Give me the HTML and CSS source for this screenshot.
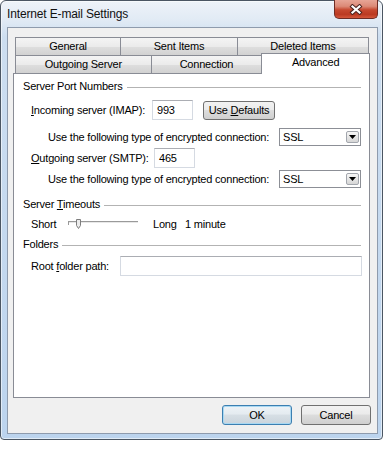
FILE: index.html
```html
<!DOCTYPE html>
<html lang="en">
<head>
    <meta charset="UTF-8">
    <meta name="viewport" content="width=device-width, initial-scale=1.0">
    <title>Internet E-mail Settings</title>
    <link rel="stylesheet" href="styles.css">
</head>
<body>
<div class="window">
    <div class="titlebar">
        <span class="title">Internet E-mail Settings</span>
        <button class="close" aria-label="Close">
            <svg width="14" height="11" viewBox="0 0 14 11">
                <path d="M3.5 2.5 L10.5 8.5 M10.5 2.5 L3.5 8.5" stroke="#4b2420" stroke-width="4.2" stroke-linecap="square" fill="none"/>
                <path d="M3.5 2.5 L10.5 8.5 M10.5 2.5 L3.5 8.5" stroke="#fff" stroke-width="2.2" stroke-linecap="square" fill="none"/>
            </svg>
        </button>
    </div>

    <div class="client">
        <div class="tabs">
            <div class="tab-row">
                <div class="tab t-general">General</div>
                <div class="tab t-sent">Sent Items</div>
                <div class="tab t-deleted">Deleted Items</div>
            </div>
            <div class="tab-row second">
                <div class="tab t-outgoing">Outgoing Server</div>
                <div class="tab t-connection">Connection</div>
                <div class="tab t-advanced selected">Advanced</div>
            </div>
        </div>

        <div class="panel">
            <div class="group g-ports">
                <span>Server Port Numbers</span>
                <span class="rule"></span>
            </div>
            <div class="row r-imap">
                <span class="lbl lbl-imap"><u>I</u>ncoming server (IMAP):</span>
                <div class="field port">993</div>
                <button class="btn defaults">Use <u>D</u>efaults</button>
            </div>
            <div class="row indent r-enc1">
                <span>Use the following type of encrypted connection:</span>
                <div class="select">
                    <span class="sel-text">SSL</span>
                    <span class="sel-btn"><svg width="7" height="4" viewBox="0 0 7 4"><path d="M0 0H7L3.5 4Z" fill="#000"/></svg></span>
                </div>
            </div>
            <div class="row r-smtp">
                <span class="lbl lbl-smtp"><u>O</u>utgoing server (SMTP):</span>
                <div class="field port">465</div>
            </div>
            <div class="row indent r-enc2">
                <span>Use the following type of encrypted connection:</span>
                <div class="select">
                    <span class="sel-text">SSL</span>
                    <span class="sel-btn"><svg width="7" height="4" viewBox="0 0 7 4"><path d="M0 0H7L3.5 4Z" fill="#000"/></svg></span>
                </div>
            </div>

            <div class="group g-timeouts">
                <span>Server <u>T</u>imeouts</span>
                <span class="rule"></span>
            </div>
            <div class="row r-slider">
                <span class="lbl lbl-short">Short</span>
                <svg class="slider" width="72" height="12" viewBox="0 0 72 12">
                    <rect x="0" y="2" width="70" height="1" fill="#9a9a9a"/>
                    <rect x="0" y="3" width="70" height="1" fill="#e8e8e8"/>
                    <rect x="0" y="2" width="1" height="4" fill="#9a9a9a"/>
                    <path d="M8.5 0.5H12.5V6.5L10.5 9.5L8.5 6.5Z" fill="#ececec" stroke="#7d7d7d"/>
                </svg>
                <span class="lbl lbl-long">Long</span>
                <span>1 minute</span>
            </div>

            <div class="group g-folders">
                <span>Folders</span>
                <span class="rule"></span>
            </div>
            <div class="row r-root">
                <span class="lbl lbl-root">Root <u>f</u>older path:</span>
                <div class="field root"></div>
            </div>
        </div>

        <div class="actions">
            <button class="btn action ok">OK</button>
            <button class="btn action">Cancel</button>
        </div>
    </div>
</div>
</body>
</html>
```

FILE: styles.css
```css
body {
    margin: 0;
    background: #fff;
    font-family: 'Liberation Sans', Arial, sans-serif;
    font-size: 11px;
    letter-spacing: -0.2px;
    color: #000;
}

u {
    text-decoration: underline;
}

/* window frame */
.window {
    width: 383px;
    height: 440px;
    box-sizing: border-box;
    border: 1px solid #4b5663;
    border-radius: 6px 6px 4px 4px;
    padding: 0 4px 5px 6px;
    background: linear-gradient(180deg, #eef3f9 0, #e2ebf5 18px, #cddef0 36px, #bcd4ee 100%);
    box-shadow: inset 0 0 0 1px rgba(255, 255, 255, 0.55);
    display: flex;
    flex-direction: column;
}

.titlebar {
    height: 26px;
    display: flex;
    align-items: flex-start;
}

.title {
    margin-top: 6px;
    line-height: 15px;
    font-size: 12px;
    letter-spacing: -0.15px;
    color: #111;
}

.close {
    margin-left: auto;
    margin-top: -1px;
    width: 44px;
    height: 19px;
    padding: 0;
    border: 1px solid #6e2c24;
    border-top: none;
    border-radius: 0 0 5px 5px;
    background: linear-gradient(180deg, #e7a596 0, #dc8a77 35%, #c6482f 55%, #bb3a22 80%, #d4573b 100%);
    display: flex;
    align-items: center;
    justify-content: center;
}

.client {
    height: 407px;
    box-sizing: border-box;
    border: 1px solid #8e9bad;
    background: #f0f0f0;
    padding: 9px 7px 0 5px;
}

/* tabs */
.tabs {
    margin-left: 2px;
}

.tab-row {
    display: flex;
}

.tab-row.second {
    margin-top: -1px;
}

.tab {
    box-sizing: border-box;
    height: 19px;
    border: 1px solid #898c95;
    background: linear-gradient(180deg, #f4f4f4 0, #ebebeb 50%, #dedede 51%, #d2d2d2 100%);
    line-height: 17px;
    text-align: center;
}

.tab + .tab {
    margin-left: -1px;
}

.t-general { width: 106px; }
.t-sent { width: 118px; }
.t-deleted { width: 132px; }
.t-outgoing { width: 137px; }
.t-connection { width: 112px; }
.t-advanced { width: 109px; }

.tab.selected {
    position: relative;
    z-index: 2;
    height: 21px;
    margin-top: -2px;
    margin-bottom: -1px;
    border-bottom: none;
    background: #fff;
}

.panel {
    height: 325px;
    box-sizing: border-box;
    margin-top: -1px;
    border: 1px solid #898c95;
    background: #fff;
    padding: 5px 8px 0 0;
}

/* group headers */
.group {
    display: flex;
    align-items: center;
    line-height: 15px;
    padding-left: 9px;
}

.rule {
    flex: 1;
    height: 1px;
    margin-left: 4px;
    margin-top: 1px;
    background: #b3b3b3;
}

.g-timeouts { margin-top: 9px; }
.g-folders { margin-top: 6px; }

/* rows */
.row {
    display: flex;
    align-items: center;
    padding-left: 17px;
}

.row.indent {
    padding-left: 34px;
}

.r-imap { margin-top: 6px; height: 20px; }
.r-enc1 { margin-top: 8px; height: 18px; }
.r-smtp { margin-top: 2px; height: 20px; }
.r-enc2 { margin-top: 2px; height: 18px; }
.r-slider { margin-top: 4px; height: 15px; }
.r-root { margin-top: 4px; height: 20px; }

.lbl-imap { width: 121px; }
.lbl-smtp { width: 123px; }
.lbl-short { width: 37px; }
.lbl-long { width: 32px; margin-left: 13px; }
.lbl-root { width: 89px; }

.field {
    box-sizing: border-box;
    height: 20px;
    border: 1px solid #d5dae2;
    border-top-color: #abadb3;
    background: #fff;
    line-height: 18px;
    padding-left: 4px;
}

.port {
    width: 41px;
}

.root {
    flex: 1;
    margin-right: -1px;
}

.slider {
    display: block;
    margin-top: 2px;
}

.select {
    margin-left: auto;
    width: 82px;
    height: 18px;
    box-sizing: border-box;
    border: 1px solid #8c8f96;
    background: #fff;
    display: flex;
    align-items: center;
}

.sel-text {
    flex: 1;
    padding-left: 3px;
}

.sel-btn {
    width: 13px;
    height: 12px;
    margin-right: 1px;
    box-sizing: border-box;
    border: 1px solid #a2a6ad;
    border-radius: 2px;
    background: linear-gradient(180deg, #f7f7f7 0, #e6e6e6 50%, #d6d6d6 100%);
    display: flex;
    align-items: center;
    justify-content: center;
}

/* buttons */
.btn {
    box-sizing: border-box;
    padding: 0;
    border: 1px solid #707070;
    border-radius: 3px;
    background: linear-gradient(180deg, #f2f2f2 0, #ebebeb 45%, #dddddd 50%, #cfcfcf 100%);
    font-family: 'Liberation Sans', Arial, sans-serif;
    font-size: 11px;
    letter-spacing: -0.2px;
    color: #000;
}

.defaults {
    width: 72px;
    height: 19px;
    margin-left: 10px;
}

.actions {
    display: flex;
    justify-content: flex-end;
    gap: 9px;
    margin-top: 7px;
    margin-right: -1px;
}

.action {
    width: 70px;
    height: 20px;
}

.ok {
    border-color: #3c7fb1;
    box-shadow: inset 0 0 0 1px #a8d8f2;
    background: linear-gradient(180deg, #eef3f7 0, #e4ebf0 45%, #d7dfe5 50%, #cad4dc 100%);
}
```
